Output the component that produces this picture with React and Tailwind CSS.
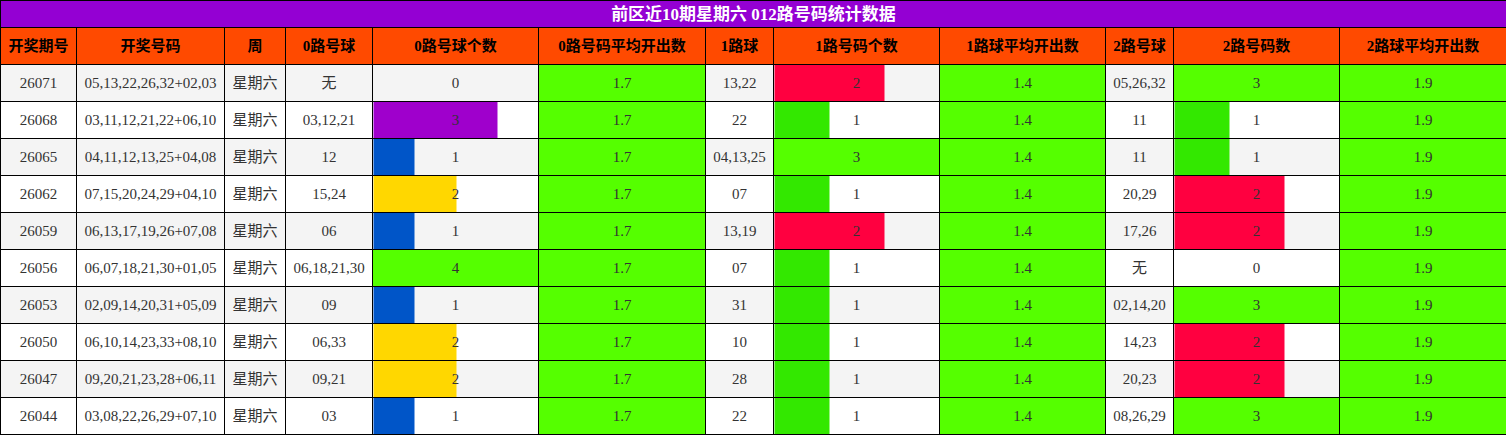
const rows = [
  ['26071', '05,13,22,26,32+02,03', '无', 0, '13,22', 2, '05,26,32', 3],
  ['26068', '03,11,12,21,22+06,10', '03,12,21', 3, '22', 1, '11', 1],
  ['26065', '04,11,12,13,25+04,08', '12', 1, '04,13,25', 3, '11', 1],
  ['26062', '07,15,20,24,29+04,10', '15,24', 2, '07', 1, '20,29', 2],
  ['26059', '06,13,17,19,26+07,08', '06', 1, '13,19', 2, '17,26', 2],
  ['26056', '06,07,18,21,30+01,05', '06,18,21,30', 4, '07', 1, '无', 0],
  ['26053', '02,09,14,20,31+05,09', '09', 1, '31', 1, '02,14,20', 3],
  ['26050', '06,10,14,23,33+08,10', '06,33', 2, '10', 1, '14,23', 2],
  ['26047', '09,20,21,23,28+06,11', '09,21', 2, '28', 1, '20,23', 2],
  ['26044', '03,08,22,26,29+07,10', '03', 1, '22', 1, '08,26,29', 3],
];

const headers = [
  '开奖期号', '开奖号码', '周', '0路号球', '0路号球个数', '0路号码平均开出数',
  '1路球', '1路号码个数', '1路球平均开出数', '2路号球', '2路号码数', '2路球平均开出数',
];
const widths = [76, 148, 61, 87, 166, 167, 68, 166, 166, 68, 166, 167];

const zeroColors = { 1: '#0055c8', 2: '#ffd700', 3: '#9f00cc', 4: '#55ff00' };
const oneColors = { 1: '#33e800', 2: '#ff0040', 3: '#55ff00' };

function barStyle(value, max, colors) {
  if (!value) return undefined;
  const pct = (value / max) * 100;
  const c = colors[value];
  return { background: `linear-gradient(to right, ${c} ${pct}%, transparent ${pct}%)` };
}

const cell = 'border border-black text-center p-0 h-[37px]';

export default function App() {
  return (
    <div className="bg-white" style={{ width: 1506 }}>
      <table
        className="table-fixed border-collapse w-[1506px] text-[15px] text-[#333]"
        style={{ fontFamily: '"Liberation Serif", "Noto Sans CJK SC", serif' }}
      >
        <colgroup>
          {widths.map((w, i) => (
            <col key={i} style={{ width: w }} />
          ))}
        </colgroup>
        <thead>
          <tr>
            <th colSpan={12} className="border border-black bg-[#9400d3] text-white text-[17px] font-bold h-[27px] p-0 leading-none">
              前区近10期星期六 012路号码统计数据
            </th>
          </tr>
          <tr>
            {headers.map((h) => (
              <th key={h} className="border border-black bg-[#ff4a00] text-black font-bold h-[37px] p-0">
                {h}
              </th>
            ))}
          </tr>
        </thead>
        <tbody>
          {rows.map((r, i) => {
            const bg = i % 2 === 0 ? 'bg-[#f4f4f4]' : 'bg-white';
            return (
              <tr key={r[0]} className={bg}>
                <td className={cell}>{r[0]}</td>
                <td className={cell}>{r[1]}</td>
                <td className={cell}>星期六</td>
                <td className={cell}>{r[2]}</td>
                <td className={cell} style={barStyle(r[3], 4, zeroColors)}>{r[3]}</td>
                <td className={`${cell} bg-[#55ff00]`}>1.7</td>
                <td className={cell}>{r[4]}</td>
                <td className={cell} style={barStyle(r[5], 3, oneColors)}>{r[5]}</td>
                <td className={`${cell} bg-[#55ff00]`}>1.4</td>
                <td className={cell}>{r[6]}</td>
                <td className={cell} style={barStyle(r[7], 3, oneColors)}>{r[7]}</td>
                <td className={`${cell} bg-[#55ff00]`}>1.9</td>
              </tr>
            );
          })}
        </tbody>
      </table>
    </div>
  );
}
